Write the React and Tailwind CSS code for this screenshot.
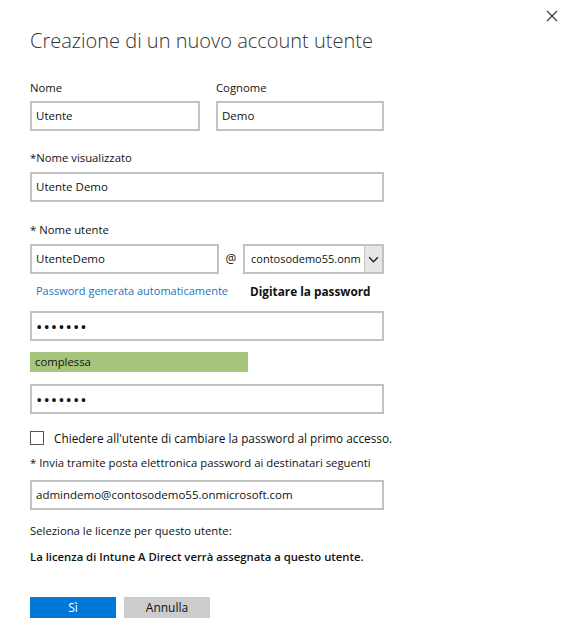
import React from "react";

const Field = ({ value, className = "", dots = false }) => (
  <div
    className={`h-[30px] border-2 border-[#c2c2c2] bg-white flex items-center pl-[4px] text-[11.5px] text-[#111] ${className}`}
  >
    {dots ? (
      <span className="text-[17px] tracking-[1px] leading-none">{value}</span>
    ) : (
      value
    )}
  </div>
);

const Label = ({ children, className = "" }) => (
  <div className={`text-[11.3px] leading-[16px] text-[#111] ${className}`}>{children}</div>
);

const App = () => {
  return (
    <div
      className="relative w-[577px] h-[631px] bg-white px-[30px] overflow-hidden"
      style={{ fontFamily: '"Segoe UI", "Open Sans", "Noto Sans", sans-serif' }}
    >
      {/* close */}
      <button className="absolute top-[10px] right-[19px] w-[12px] h-[12px]">
        <svg viewBox="0 0 12 12" className="w-[12px] h-[12px]">
          <path d="M1 1 L11 11 M11 1 L1 11" stroke="#333" strokeWidth="1.1" />
        </svg>
      </button>

      <div className="pt-[26px] text-[20px] leading-[30px] font-light text-[#333]">
        Creazione di un nuovo account utente
      </div>

      {/* nome / cognome */}
      <div className="mt-[24px] flex gap-[16px] w-[354px]">
        <div className="w-[170px]">
          <Label>Nome</Label>
          <Field value="Utente" className="mt-[5px]" />
        </div>
        <div className="w-[168px]">
          <Label>Cognome</Label>
          <Field value="Demo" className="mt-[5px]" />
        </div>
      </div>

      <Label className="mt-[19px]">*Nome visualizzato</Label>
      <Field value="Utente Demo" className="mt-[6px] w-[354px]" />

      <Label className="mt-[20px]">* Nome utente</Label>
      <div className="mt-[6px] flex items-center w-[354px]">
        <Field value="UtenteDemo" className="w-[189px] shrink-0" />
        <div className="w-[24px] shrink-0 text-center text-[12px] text-[#111]">@</div>
        <div className="flex-1 min-w-0 h-[30px] border-2 border-[#c2c2c2] flex items-stretch">
          <div className="flex-1 min-w-0 flex items-center pl-[6px] text-[11px] text-[#111] overflow-hidden whitespace-nowrap">
            contosodemo55.onm
          </div>
          <div className="w-[18px] shrink-0 bg-[#e6e6e6] border-l border-[#c2c2c2] flex items-center justify-center">
            <svg viewBox="0 0 12 8" className="w-[11px] h-[7px]">
              <path d="M1 1.5 L6 6.5 L11 1.5" fill="none" stroke="#222" strokeWidth="1.6" />
            </svg>
          </div>
        </div>
      </div>

      <div className="mt-[9px] flex leading-[16px] w-[354px]">
        <span className="ml-[6px] shrink-0 text-[11px] text-[#1a73c4] w-[214px]">Password generata automaticamente</span>
        <span className="shrink-0 text-[11.8px] font-bold text-[#111]">Digitare la password</span>
      </div>

      <Field value="•••••••" dots className="mt-[12px] w-[354px]" />

      <div className="mt-[11px] w-[218px] h-[20px] bg-[#a8c57c] flex items-center pl-[5px] text-[11.3px] text-[#111]">
        complessa
      </div>

      <Field value="•••••••" dots className="mt-[12px] w-[354px]" />

      <div className="mt-[16px] flex items-center gap-[10px] text-[11.8px] leading-[16px] text-[#111]">
        <div className="w-[14px] h-[14px] border border-[#555] bg-white" />
        <span>Chiedere all'utente di cambiare la password al primo accesso.</span>
      </div>

      <Label className="mt-[9px]">* Invia tramite posta elettronica password ai destinatari seguenti</Label>
      <Field value="admindemo@contosodemo55.onmicrosoft.com" className="mt-[9px] w-[354px]" />

      <Label className="mt-[13px]">Seleziona le licenze per questo utente:</Label>
      <Label className="mt-[10px] font-semibold">La licenza di Intune A Direct verrà assegnata a questo utente.</Label>

      <div className="mt-[32px] flex gap-[8px]">
        <button className="w-[86px] h-[21px] bg-[#0078d7] text-white text-[12px] leading-[21px]">Sì</button>
        <button className="w-[86px] h-[21px] bg-[#cccccc] text-[#111] text-[12px] leading-[21px]">Annulla</button>
      </div>
    </div>
  );
};

export default App;
